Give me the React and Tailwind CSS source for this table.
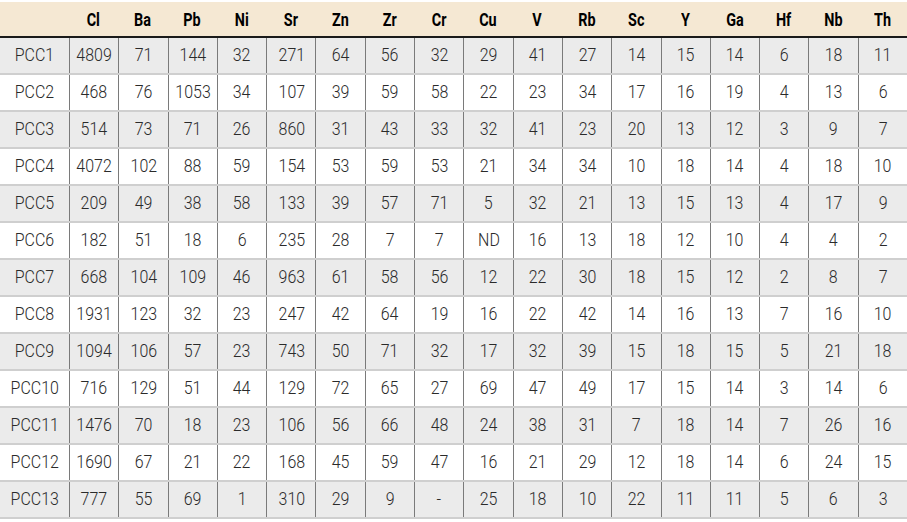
const COLS = ['Cl', 'Ba', 'Pb', 'Ni', 'Sr', 'Zn', 'Zr', 'Cr', 'Cu', 'V', 'Rb', 'Sc', 'Y', 'Ga', 'Hf', 'Nb', 'Th'];

const ROWS = [
  ['PCC1', 4809, 71, 144, 32, 271, 64, 56, 32, 29, 41, 27, 14, 15, 14, 6, 18, 11],
  ['PCC2', 468, 76, 1053, 34, 107, 39, 59, 58, 22, 23, 34, 17, 16, 19, 4, 13, 6],
  ['PCC3', 514, 73, 71, 26, 860, 31, 43, 33, 32, 41, 23, 20, 13, 12, 3, 9, 7],
  ['PCC4', 4072, 102, 88, 59, 154, 53, 59, 53, 21, 34, 34, 10, 18, 14, 4, 18, 10],
  ['PCC5', 209, 49, 38, 58, 133, 39, 57, 71, 5, 32, 21, 13, 15, 13, 4, 17, 9],
  ['PCC6', 182, 51, 18, 6, 235, 28, 7, 7, 'ND', 16, 13, 18, 12, 10, 4, 4, 2],
  ['PCC7', 668, 104, 109, 46, 963, 61, 58, 56, 12, 22, 30, 18, 15, 12, 2, 8, 7],
  ['PCC8', 1931, 123, 32, 23, 247, 42, 64, 19, 16, 22, 42, 14, 16, 13, 7, 16, 10],
  ['PCC9', 1094, 106, 57, 23, 743, 50, 71, 32, 17, 32, 39, 15, 18, 15, 5, 21, 18],
  ['PCC10', 716, 129, 51, 44, 129, 72, 65, 27, 69, 47, 49, 17, 15, 14, 3, 14, 6],
  ['PCC11', 1476, 70, 18, 23, 106, 56, 66, 48, 24, 38, 31, 7, 18, 14, 7, 26, 16],
  ['PCC12', 1690, 67, 21, 22, 168, 45, 59, 47, 16, 21, 29, 12, 18, 14, 6, 24, 15],
  ['PCC13', 777, 55, 69, 1, 310, 29, 9, '-', 25, 18, 10, 22, 11, 11, 5, 6, 3],
];

const gridCols = 'grid grid-cols-[69px_repeat(17,minmax(0,1fr))]';

export default function App() {
  return (
    <div
      className="w-[907px] h-[522px] bg-white pt-[2px] overflow-hidden text-[#2a2a2a]"
      style={{ fontFamily: 'Roboto, "Liberation Sans", sans-serif' }}
    >
      <div className={`${gridCols} h-[36px] bg-[#f5e8d3] border-b-2 border-[#1a1a1a]`}>
        <div />
        {COLS.map(c => (
          <div key={c} className="flex items-center justify-center text-[18px] font-bold text-black">
            <span className="inline-block scale-x-[0.8]">{c}</span>
          </div>
        ))}
      </div>

      {ROWS.map((row, i) => (
        <div
          key={row[0]}
          className={`${gridCols} h-[37px] border-b-2 border-[#cfcfcf] ${i % 2 === 0 ? 'bg-[#ebebeb]' : 'bg-white'}`}
        >
          {row.map((v, j) => (
            <div
              key={j}
              className={`flex items-center justify-center text-[19px] font-light whitespace-nowrap ${j > 0 ? 'border-l border-[#7a7a7a]' : ''}`}
            >
              <span className="inline-block scale-x-[0.84]">{v}</span>
            </div>
          ))}
        </div>
      ))}
    </div>
  );
}
